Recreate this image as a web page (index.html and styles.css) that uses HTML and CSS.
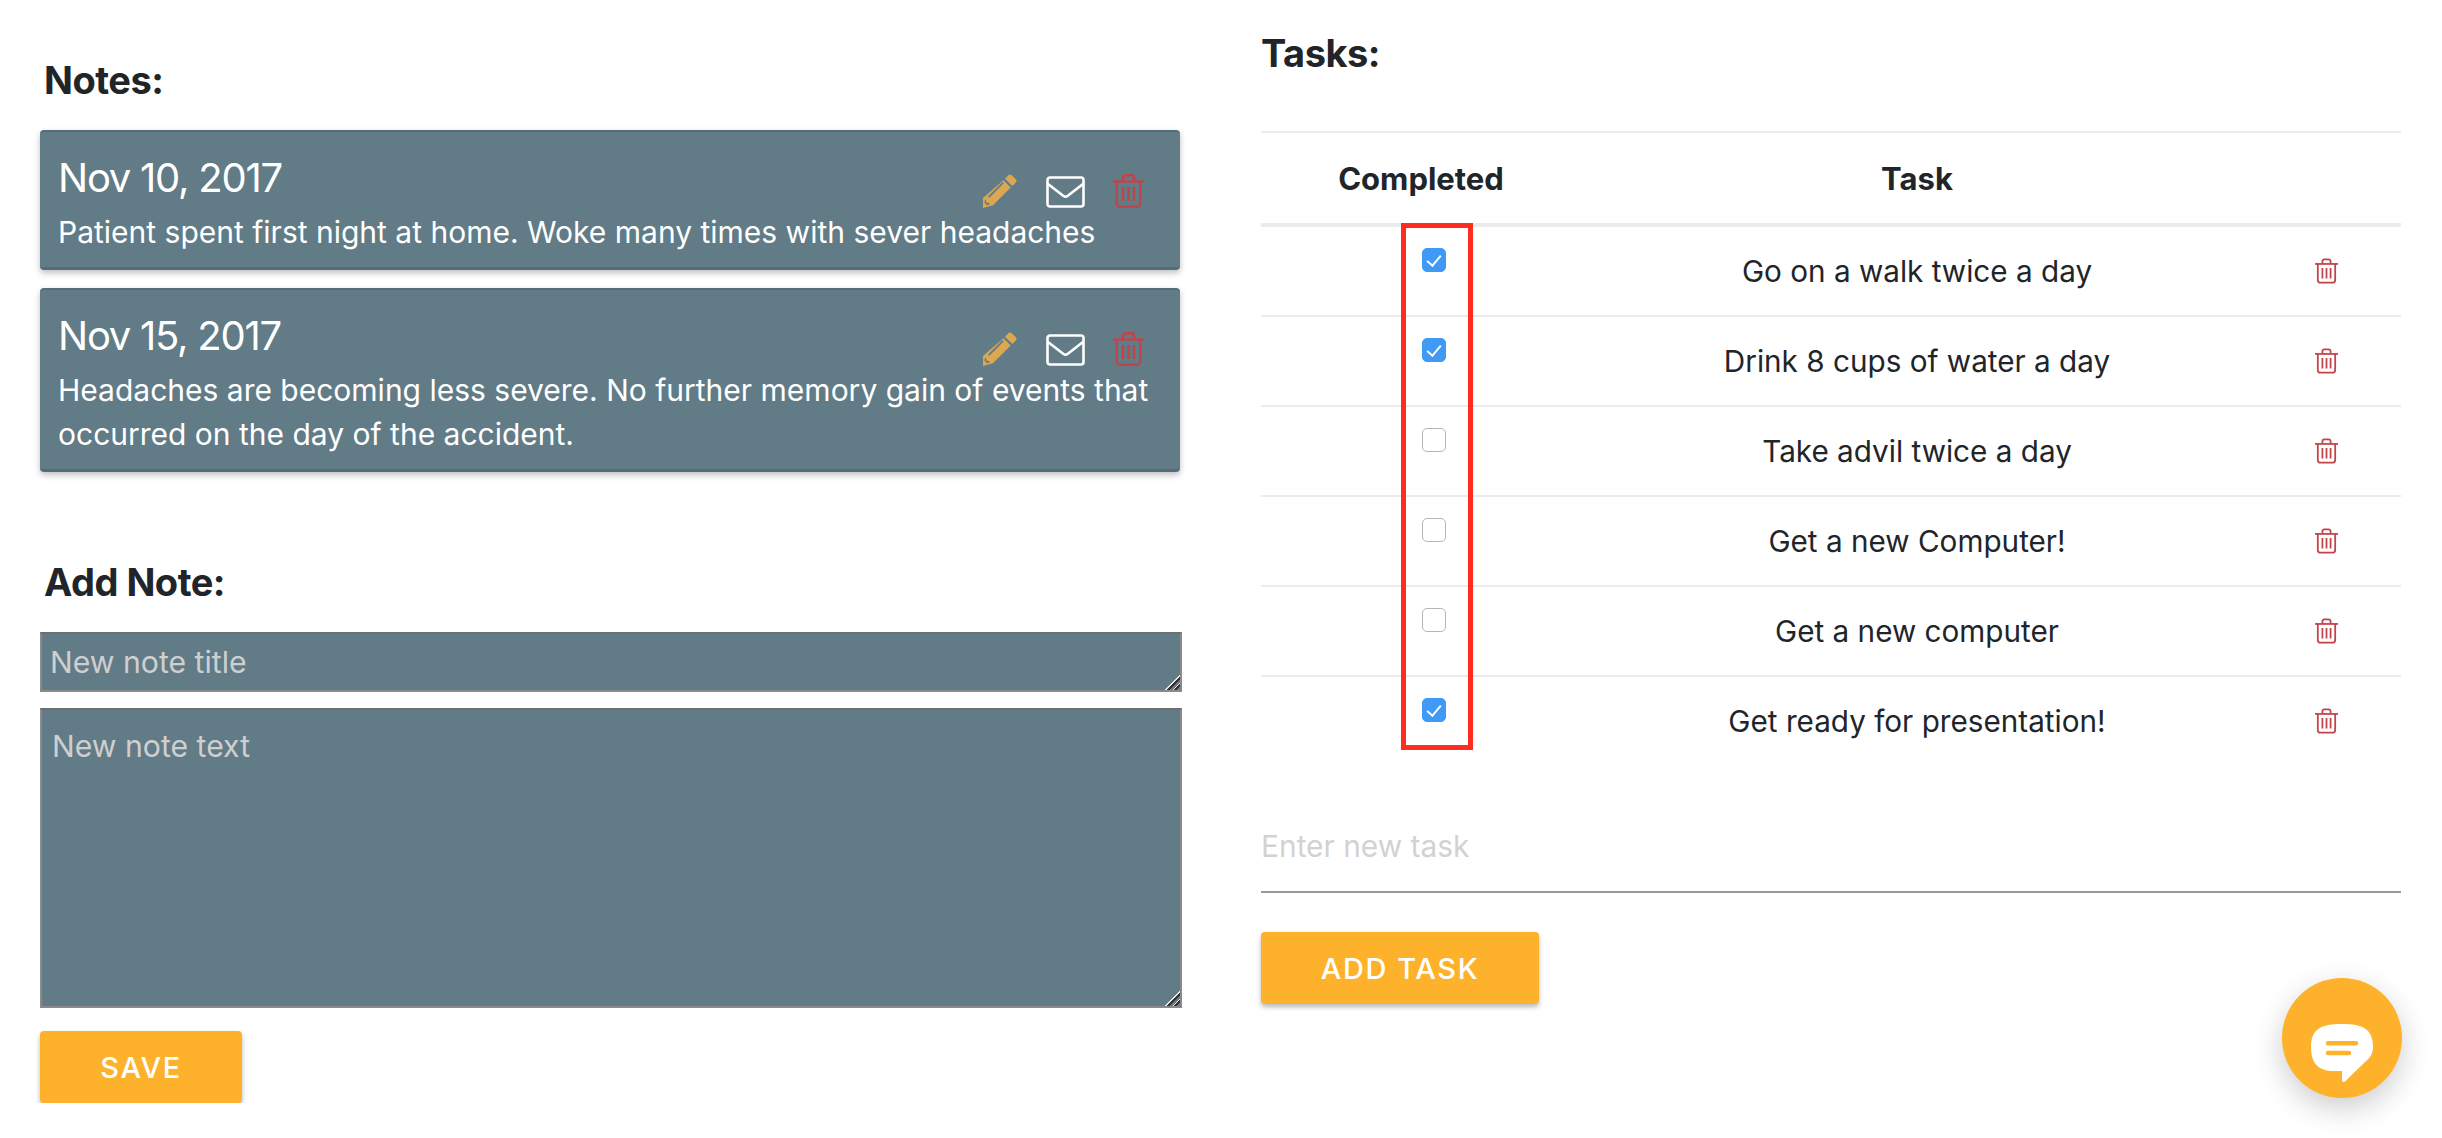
FILE: index.html
```html
<!DOCTYPE html>
<html lang="en">
<head>
    <meta charset="UTF-8">
    <title>Notes and Tasks</title>
    <link rel="stylesheet" href="styles.css">
</head>
<body>
    <svg class="icon-defs" width="0" height="0">
        <symbol id="pencil" viewBox="0 0 34 34">
            <path d="M25.5 1.2a2.4 2.4 0 0 1 3.3 0l4 4a2.4 2.4 0 0 1 0 3.3l-3.5 3.5-7.3-7.300zM20.400 6.300l7.300 7.300-17.700 17.700-10 2.700v-10zM5 22.500l1.300 1.300 14.500-14.500-1.300-1.300zM3.200 26.500v2.300h2.300l1.500 1.500-3 .9-2.600-2.600.9-3z" fill-rule="evenodd"/>
        </symbol>
        <symbol id="envelope" viewBox="0 0 39 32">
            <rect x="1.500" y="1.500" width="36" height="29" rx="2.500" fill="none" stroke="currentColor" stroke-width="2.600"/>
            <path d="M2 8l15.500 12q2 1.500 4 0L37 8" fill="none" stroke="currentColor" stroke-width="2.600"/>
        </symbol>
        <symbol id="trash" viewBox="0 0 31 34">
            <g fill="none" stroke="currentColor" stroke-width="2.400">
                <path d="M0 7.500h31"/>
                <path d="M10 7V4q0-2.800 2.800-2.800h5.400Q21 1.200 21 4v3"/>
                <path d="M3.800 7.500V29q0 3.800 3.800 3.800h15.800q3.800 0 3.800-3.800V7.500"/>
                <path d="M10 13v14M15.500 13v14M21 13v14"/>
            </g>
        </symbol>
    </svg>

    <main class="page">
        <section class="notes">
            <h2 class="notes-title">Notes:</h2>

            <article class="note">
                <div class="note-head">
                    <h3>Nov 10, 2017</h3>
                    <div class="note-icons">
                        <svg class="ico-pencil"><use href="#pencil"/></svg>
                        <svg class="ico-mail"><use href="#envelope"/></svg>
                        <svg class="ico-trash"><use href="#trash"/></svg>
                    </div>
                </div>
                <p>Patient spent first night at home. Woke many times with sever headaches</p>
            </article>

            <article class="note">
                <div class="note-head">
                    <h3>Nov 15, 2017</h3>
                    <div class="note-icons">
                        <svg class="ico-pencil"><use href="#pencil"/></svg>
                        <svg class="ico-mail"><use href="#envelope"/></svg>
                        <svg class="ico-trash"><use href="#trash"/></svg>
                    </div>
                </div>
                <p>Headaches are becoming less severe. No further memory gain of events that occurred on the day of the accident.</p>
            </article>

            <h2 class="add-title">Add Note:</h2>
            <textarea class="field field-title" placeholder="New note title"></textarea>
            <textarea class="field field-text" placeholder="New note text"></textarea>
            <button class="btn btn-save">SAVE</button>
        </section>

        <section class="tasks">
            <h2 class="tasks-title">Tasks:</h2>

            <div class="table-wrap">
                <table class="task-table">
                    <thead>
                        <tr>
                            <th class="col-done">Completed</th>
                            <th class="col-task">Task</th>
                            <th class="col-del"></th>
                        </tr>
                    </thead>
                    <tbody>
                        <tr>
                            <td class="cell-check"><input type="checkbox" checked></td>
                            <td>Go on a walk twice a day</td>
                            <td><svg class="row-trash"><use href="#trash"/></svg></td>
                        </tr>
                        <tr>
                            <td class="cell-check"><input type="checkbox" checked></td>
                            <td>Drink 8 cups of water a day</td>
                            <td><svg class="row-trash"><use href="#trash"/></svg></td>
                        </tr>
                        <tr>
                            <td class="cell-check"><input type="checkbox"></td>
                            <td>Take advil twice a day</td>
                            <td><svg class="row-trash"><use href="#trash"/></svg></td>
                        </tr>
                        <tr>
                            <td class="cell-check"><input type="checkbox"></td>
                            <td>Get a new Computer!</td>
                            <td><svg class="row-trash"><use href="#trash"/></svg></td>
                        </tr>
                        <tr>
                            <td class="cell-check"><input type="checkbox"></td>
                            <td>Get a new computer</td>
                            <td><svg class="row-trash"><use href="#trash"/></svg></td>
                        </tr>
                        <tr>
                            <td class="cell-check"><input type="checkbox" checked></td>
                            <td>Get ready for presentation!</td>
                            <td><svg class="row-trash"><use href="#trash"/></svg></td>
                        </tr>
                    </tbody>
                </table>
                <div class="highlight"></div>
            </div>

            <input class="new-task" type="text" placeholder="Enter new task">
            <button class="btn btn-add">ADD TASK</button>
        </section>
    </main>

    <button class="chat">
        <svg width="62" height="59" viewBox="0 0 62 59">
            <path d="M31 0C52 0 62 5 62 23C62 30 59 34 54 38L34 57.500Q31 59 31 56V47H23C8 47 0 40 0 23C0 5 10 0 31 0Z" fill="#fff"/>
            <path d="M17 19.200H45M17 29H38" stroke="#feb22c" stroke-width="4.400" stroke-linecap="round"/>
        </svg>
    </button>
</body>
</html>
```

FILE: styles.css
```css
body {
    margin: 0;
    font-family: "Inter", "Liberation Sans", sans-serif;
    color: #212529;
    background: #fff;
}
.icon-defs {
    position: absolute;
}
.page {
    display: grid;
    grid-template-columns: 1142px 1140px;
    column-gap: 79px;
    padding-left: 40px;
}
h2 {
    margin: 0;
    font-size: 38px;
    line-height: 44px;
    font-weight: 700;
    letter-spacing: -0.5px;
}
.notes-title {
    margin: 58px 0 28px 4px;
}
.note {
    width: 1140px;
    box-sizing: border-box;
    background: #617b87;
    color: #fff;
    border-radius: 4px;
    border-top: 2px solid #546d79;
    border-bottom: 3px solid #546d79;
    box-shadow: 0 3px 6px rgba(0, 0, 0, 0.25);
    padding: 22px 18px 13px 18px;
    margin-bottom: 18px;
}
.note-head {
    display: flex;
    justify-content: space-between;
    height: 56px;
}
.note h3 {
    margin: 0;
    font-size: 40px;
    line-height: 48px;
    font-weight: 400;
    letter-spacing: -1.250px;
}
.note p {
    margin: 0;
    font-size: 30px;
    line-height: 44px;
}
.note-icons {
    display: flex;
    align-items: flex-end;
    height: 54px;
    margin-right: 18px;
    color: #fff;
}
.ico-pencil {
    width: 34px;
    height: 34px;
    fill: #dca74e;
    margin-right: 29px;
}
.ico-mail {
    width: 39px;
    height: 32px;
    margin-right: 28px;
}
.ico-trash {
    width: 31px;
    height: 34px;
    color: #c0444a;
}
.add-title {
    margin: 88px 0 28px 4px;
}
.field {
    display: block;
    width: 1142px;
    box-sizing: border-box;
    margin: 0;
    background: #617b87;
    color: #fff;
    border: 2px solid #8a8a8a;
    border-top-color: #6e6e6e;
    font-family: "Inter", "Liberation Sans", sans-serif;
    font-size: 30.200px;
    outline: none;
}
.field::-webkit-resizer {
    background: linear-gradient(135deg, transparent 48%, #e8e8e8 48%, #e8e8e8 56%, #333 56%, #333 64%, transparent 64%, transparent 74%, #e8e8e8 74%, #e8e8e8 80%, #333 80%, #333 88%, transparent 88%);
}
.field::placeholder {
    color: #cfcfcf;
}
.field-title {
    height: 60px;
    padding: 10px 8px;
    margin-bottom: 16px;
}
.field-text {
    height: 300px;
    padding: 18px 10px;
    margin-bottom: 23px;
}
.btn {
    display: block;
    border: none;
    border-radius: 4px;
    background: #feb22c;
    color: #fff;
    font-family: "Inter", "Liberation Sans", sans-serif;
    font-size: 29px;
    font-weight: 500;
    letter-spacing: 1.600px;
    box-shadow: 0 3px 5px rgba(0, 0, 0, 0.28);
}
.btn-save {
    width: 202px;
    height: 72px;
}
.btn-add {
    width: 278px;
    height: 72px;
}
.tasks-title {
    margin: 31px 0 56px 0;
}
.table-wrap {
    position: relative;
}
.task-table {
    width: 1140px;
    border-collapse: collapse;
    table-layout: fixed;
    font-size: 29.700px;
    text-align: center;
}
.task-table th {
    height: 90px;
    padding: 0;
    font-size: 31px;
    font-weight: 700;
    border-top: 2px solid #e9ecef;
    border-bottom: 4px solid #e9ecef;
}
.col-done {
    width: 320px;
}
.col-del {
    width: 148px;
}
.task-table td {
    height: 88px;
    padding: 0;
    border-bottom: 2px solid #e9ecef;
    vertical-align: middle;
}
.task-table tr:last-child td {
    border-bottom: none;
}
.task-table .cell-check {
    vertical-align: top;
}
.cell-check input {
    appearance: none;
    position: relative;
    display: block;
    box-sizing: border-box;
    width: 24px;
    height: 24px;
    margin: 21px 0 0 161px;
    background: #fff;
    border: 1px solid #b5b5b5;
    border-radius: 5px;
}
.cell-check input:checked {
    background: #3f99f5;
    border-color: #3f99f5;
}
.cell-check input:checked::after {
    content: "";
    position: absolute;
    left: 7px;
    top: 3px;
    width: 6px;
    height: 12px;
    border: solid #fff;
    border-width: 0 2px 2px 0;
    transform: rotate(40deg);
}
.row-trash {
    display: inline-block;
    vertical-align: middle;
    width: 23px;
    height: 26px;
    margin: 0 2px 5px 0;
    color: #c0444a;
}
.highlight {
    position: absolute;
    left: 140px;
    top: 92px;
    width: 72px;
    height: 527px;
    box-sizing: border-box;
    border: 5px solid #ff2d20;
}
.new-task {
    display: block;
    width: 1140px;
    height: 66px;
    box-sizing: border-box;
    margin: 62px 0 39px;
    padding: 0 0 26px;
    border: none;
    border-bottom: 2px solid #999;
    font-family: "Inter", "Liberation Sans", sans-serif;
    font-size: 29.900px;
    outline: none;
}
.new-task::placeholder {
    color: #d2d2d2;
}
.chat {
    position: absolute;
    left: 2282px;
    top: 978px;
    width: 120px;
    height: 120px;
    padding: 0;
    border: none;
    border-radius: 50%;
    background: #feb22c;
    box-shadow: 0 10px 30px rgba(0, 0, 0, 0.2);
}
.chat svg {
    display: block;
    margin: 31px 0 0 29px;
}
```
